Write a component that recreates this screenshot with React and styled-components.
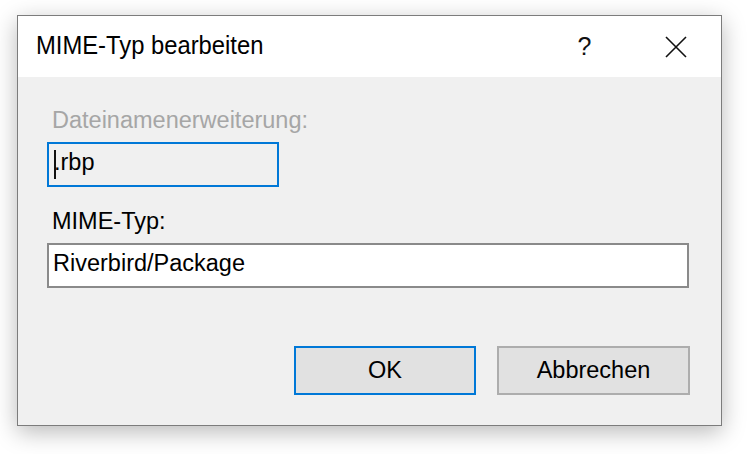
import React from 'react'
import styled, { createGlobalStyle } from 'styled-components'

const GlobalStyle = createGlobalStyle`
    html, body {
        margin: 0;
        padding: 0;
        background: #ffffff;
    }
    body {
        font-family: "Liberation Sans", Arial, sans-serif;
    }
`

const Page = styled.div`
    width: 747px;
    height: 454px;
    padding: 15px 0 0 17px;
    box-sizing: border-box;
    overflow: hidden;
`

const Window = styled.div`
    width: 705px;
    height: 411px;
    box-sizing: border-box;
    border: 1px solid #7c7c7c;
    background: #f0f0f0;
    box-shadow: 0 6px 22px rgba(0, 0, 0, 0.28);
    display: flex;
    flex-direction: column;
`

const TitleBar = styled.div`
    height: 61px;
    flex-shrink: 0;
    background: #ffffff;
    display: flex;
    align-items: center;
    padding-left: 18px;
`

const Title = styled.div`
    flex: 1;
    font-size: 26px;
    color: #000;
    transform: scaleX(0.915);
    transform-origin: left center;
    white-space: nowrap;
    margin-top: -2px;
`

const TitleButton = styled.div`
    width: 91px;
    height: 61px;
    display: flex;
    align-items: center;
    justify-content: center;
    font-size: 25px;
    color: #111;
`

const Body = styled.div`
    flex: 1;
    padding: 30px 31px 0 29px;
    display: flex;
    flex-direction: column;
    align-items: flex-start;
`

const Label = styled.div`
    font-size: 23.5px;
    line-height: 27px;
    color: ${p => (p.disabled ? '#a6a6a6' : '#000')};
    margin-left: 5px;
    margin-bottom: 8px;
`

const Field = styled.div`
    width: ${p => p.width}px;
    height: 45px;
    box-sizing: border-box;
    border: 2px solid ${p => (p.focused ? '#0078d7' : '#8a8a8a')};
    background: ${p => (p.readOnly ? '#f0f0f0' : '#ffffff')};
    display: flex;
    align-items: center;
    padding: 0 3px 5px 4px;
    font-size: 23.5px;
    line-height: 27px;
    color: #000;
    margin-bottom: ${p => p.gap}px;
`

const Caret = styled.span`
    display: inline-block;
    width: 2px;
    height: 29px;
    background: #111;
    margin: 4px -2px 0 1px;
`

const ButtonRow = styled.div`
    align-self: stretch;
    display: flex;
    justify-content: flex-end;
    gap: 21px;
`

const Button = styled.div`
    width: ${p => p.width}px;
    height: 49px;
    box-sizing: border-box;
    border: 2px solid ${p => (p.primary ? '#0078d7' : '#adadad')};
    background: #e1e1e1;
    display: flex;
    align-items: center;
    justify-content: center;
    font-size: 23.5px;
    color: #000;
    padding-bottom: 1px;
`

const CloseIcon = () => (
    <svg width="22" height="22" viewBox="0 0 22 22">
        <path d="M1 1 L21 21 M21 1 L1 21" stroke="#111" strokeWidth="1.6" fill="none" />
    </svg>
)

export default function App() {
    return (
        <>
            <GlobalStyle />
            <Page>
                <Window>
                    <TitleBar>
                        <Title>MIME-Typ bearbeiten</Title>
                        <TitleButton>?</TitleButton>
                        <TitleButton><CloseIcon /></TitleButton>
                    </TitleBar>
                    <Body>
                        <Label disabled>Dateinamenerweiterung:</Label>
                        <Field width={232} focused readOnly gap={21}>
                            <Caret />.rbp
                        </Field>
                        <Label>MIME-Typ:</Label>
                        <Field width={642} gap={58}>Riverbird/Package</Field>
                        <ButtonRow>
                            <Button primary width={182}>OK</Button>
                            <Button width={193}>Abbrechen</Button>
                        </ButtonRow>
                    </Body>
                </Window>
            </Page>
        </>
    )
}
